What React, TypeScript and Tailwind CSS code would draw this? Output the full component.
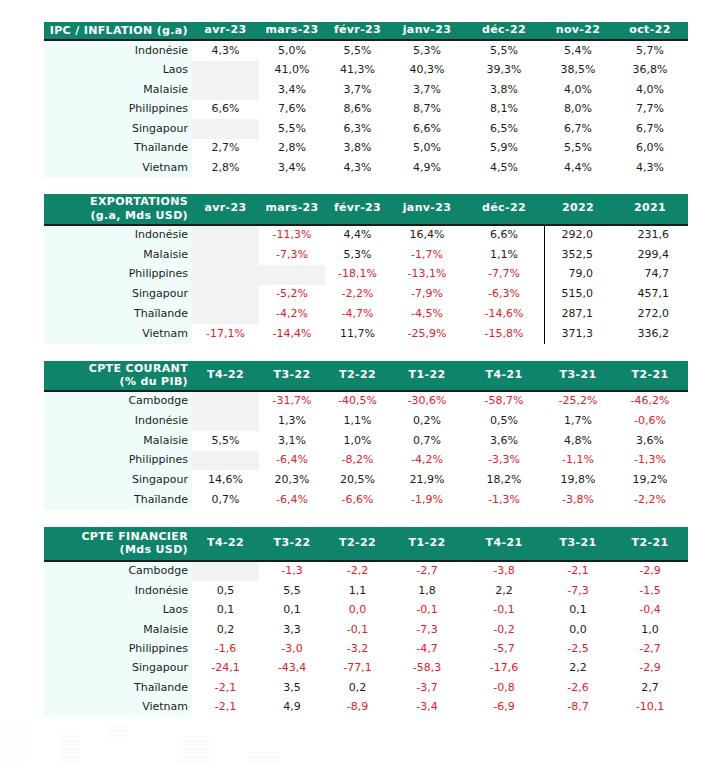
import React from "react";

type Cell = string | null;

type Table = {
  title: string[];
  cols: string[];
  headH: string;
  rowH: string;
  mt: string;
  rows: [string, Cell[]][];
  split?: boolean;
};

const tables: Table[] = [
  {
    title: ["IPC / INFLATION (g.a)"],
    cols: ["avr-23", "mars-23", "févr-23", "janv-23", "déc-22", "nov-22", "oct-22"],
    headH: "h-[17px]",
    rowH: "h-[19.5px]",
    mt: "mt-[22px]",
    rows: [
      ["Indonésie", ["4,3%", "5,0%", "5,5%", "5,3%", "5,5%", "5,4%", "5,7%"]],
      ["Laos", [null, "41,0%", "41,3%", "40,3%", "39,3%", "38,5%", "36,8%"]],
      ["Malaisie", [null, "3,4%", "3,7%", "3,7%", "3,8%", "4,0%", "4,0%"]],
      ["Philippines", ["6,6%", "7,6%", "8,6%", "8,7%", "8,1%", "8,0%", "7,7%"]],
      ["Singapour", [null, "5,5%", "6,3%", "6,6%", "6,5%", "6,7%", "6,7%"]],
      ["Thaïlande", ["2,7%", "2,8%", "3,8%", "5,0%", "5,9%", "5,5%", "6,0%"]],
      ["Vietnam", ["2,8%", "3,4%", "4,3%", "4,9%", "4,5%", "4,4%", "4,3%"]],
    ],
  },
  {
    title: ["EXPORTATIONS", "(g.a, Mds USD)"],
    cols: ["avr-23", "mars-23", "févr-23", "janv-23", "déc-22", "2022", "2021"],
    headH: "h-[30px]",
    rowH: "h-[19.7px]",
    mt: "mt-[16px]",
    split: true,
    rows: [
      ["Indonésie", [null, "-11,3%", "4,4%", "16,4%", "6,6%", "292,0", "231,6"]],
      ["Malaisie", [null, "-7,3%", "5,3%", "-1,7%", "1,1%", "352,5", "299,4"]],
      ["Philippines", [null, null, "-18,1%", "-13,1%", "-7,7%", "79,0", "74,7"]],
      ["Singapour", [null, "-5,2%", "-2,2%", "-7,9%", "-6,3%", "515,0", "457,1"]],
      ["Thaïlande", [null, "-4,2%", "-4,7%", "-4,5%", "-14,6%", "287,1", "272,0"]],
      ["Vietnam", ["-17,1%", "-14,4%", "11,7%", "-25,9%", "-15,8%", "371,3", "336,2"]],
    ],
  },
  {
    title: ["CPTE COURANT", "(% du PIB)"],
    cols: ["T4-22", "T3-22", "T2-22", "T1-22", "T4-21", "T3-21", "T2-21"],
    headH: "h-[29px]",
    rowH: "h-[19.7px]",
    mt: "mt-[17px]",
    rows: [
      ["Cambodge", [null, "-31,7%", "-40,5%", "-30,6%", "-58,7%", "-25,2%", "-46,2%"]],
      ["Indonésie", [null, "1,3%", "1,1%", "0,2%", "0,5%", "1,7%", "-0,6%"]],
      ["Malaisie", ["5,5%", "3,1%", "1,0%", "0,7%", "3,6%", "4,8%", "3,6%"]],
      ["Philippines", [null, "-6,4%", "-8,2%", "-4,2%", "-3,3%", "-1,1%", "-1,3%"]],
      ["Singapour", ["14,6%", "20,3%", "20,5%", "21,9%", "18,2%", "19,8%", "19,2%"]],
      ["Thaïlande", ["0,7%", "-6,4%", "-6,6%", "-1,9%", "-1,3%", "-3,8%", "-2,2%"]],
    ],
  },
  {
    title: ["CPTE FINANCIER", "(Mds USD)"],
    cols: ["T4-22", "T3-22", "T2-22", "T1-22", "T4-21", "T3-21", "T2-21"],
    headH: "h-[33px]",
    rowH: "h-[19.45px]",
    mt: "mt-[17px]",
    rows: [
      ["Cambodge", [null, "-1,3", "-2,2", "-2,7", "-3,8", "-2,1", "-2,9"]],
      ["Indonésie", ["0,5", "5,5", "1,1", "1,8", "2,2", "-7,3", "-1,5"]],
      ["Laos", ["0,1", "0,1", "r:0,0", "-0,1", "-0,1", "0,1", "-0,4"]],
      ["Malaisie", ["0,2", "3,3", "-0,1", "-7,3", "-0,2", "0,0", "1,0"]],
      ["Philippines", ["-1,6", "-3,0", "-3,2", "-4,7", "-5,7", "-2,5", "-2,7"]],
      ["Singapour", ["-24,1", "-43,4", "-77,1", "-58,3", "-17,6", "2,2", "-2,9"]],
      ["Thaïlande", ["-2,1", "3,5", "0,2", "-3,7", "-0,8", "-2,6", "2,7"]],
      ["Vietnam", ["-2,1", "4,9", "-8,9", "-3,4", "-6,9", "-8,7", "-10,1"]],
    ],
  },
];

const grid = "grid grid-cols-[148px_67px_66px_65px_74px_80px_68px_76px]";

function DataTable({ t }: { t: Table }) {
  return (
    <div className={`w-[644px] ${t.mt}`}>
      <div className={`${grid} ${t.headH} box-content items-center border-b-2 border-[#1c1c1c] bg-[#10846b] font-bold tracking-[0.35px] text-white`}>
        <div className="pr-1 text-right leading-[13.5px]">
          {t.title.map((l) => (
            <div key={l}>{l}</div>
          ))}
        </div>
        {t.cols.map((c) => (
          <div key={c} className="text-center">
            {c}
          </div>
        ))}
      </div>
      {t.rows.map(([label, vals]) => (
        <div key={label} className={`${grid} ${t.rowH}`}>
          <div className="flex items-center justify-end bg-[#effcfa] pr-1 text-[#1c1c1c]">{label}</div>
          {vals.map((v, i) => {
            if (v === null) return <div key={i} className="bg-[#f2f2f2]" />;
            const forcedRed = v.startsWith("r:");
            const text = forcedRed ? v.slice(2) : v;
            const red = forcedRed || text.startsWith("-");
            const right = t.split && i >= 5;
            return (
              <div
                key={i}
                className={`flex items-center ${right ? "justify-end pr-[19px]" : "justify-center"} ${
                  t.split && i === 5 ? "border-l-[1.5px] border-black" : ""
                } ${red ? "text-[#e0212b]" : "text-[#1c1c1c]"}`}
              >
                {text}
              </div>
            );
          })}
        </div>
      ))}
    </div>
  );
}

function Dots() {
  const pts: [number, number][] = [];
  for (let x = 2; x < 30; x += 4) for (let y = 2; y < 44; y += 4) if ((x + y) % 8 !== 0) pts.push([x, y]);
  for (let x = 62; x < 80; x += 4) for (let y = 10; y < 40; y += 4) pts.push([x, y]);
  for (let x = 110; x < 130; x += 4) for (let y = 4; y < 20; y += 4) pts.push([x, y]);
  for (let x = 180; x < 210; x += 4) for (let y = 14; y < 44; y += 4) pts.push([x, y]);
  for (let x = 250; x < 280; x += 4) for (let y = 30; y < 44; y += 4) pts.push([x, y]);
  return (
    <svg width="300" height="44" className="block">
      {pts.map(([x, y], i) => (
        <circle key={i} cx={x} cy={y} r="1" fill="#f4f4f4" />
      ))}
    </svg>
  );
}

export default function App() {
  return (
    <div className="min-h-[762px] w-[719px] bg-white text-[11px] font-['DejaVu_Sans',sans-serif]">
      <div className="flex flex-col pl-[44px]">
        {tables.map((t) => (
          <DataTable key={t.title[0]} t={t} />
        ))}
      </div>
      <div className="mt-[6px]">
        <Dots />
      </div>
    </div>
  );
}
